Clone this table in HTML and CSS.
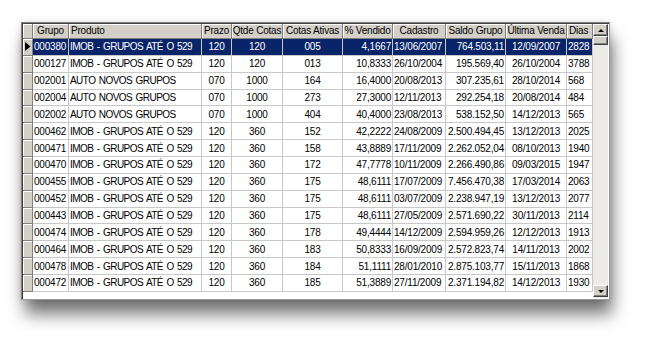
FILE: index.html
```html
<!DOCTYPE html>
<html>
<head>
<meta charset="utf-8">
<link rel="stylesheet" href="styles.css">
</head>
<body>
<div class="frame">
  <div class="grid">
    <table class="tbl">
      <colgroup>
        <col class="c-ind"><col class="c-grupo"><col class="c-prod"><col class="c-prazo"><col class="c-qtde"><col class="c-ativas"><col class="c-vend"><col class="c-cad"><col class="c-saldo"><col class="c-ult"><col class="c-dias">
      </colgroup>
      <thead>
        <tr class="hdr">
          <th class="ind"></th>
          <th>Grupo</th>
          <th class="l">Produto</th>
          <th>Prazo</th>
          <th>Qtde Cotas</th>
          <th>Cotas Ativas</th>
          <th>% Vendido</th>
          <th>Cadastro</th>
          <th>Saldo Grupo</th>
          <th>Última Venda</th>
          <th class="l">Dias</th>
        </tr>
      </thead>
      <tbody>
        <tr class="sel"><td class="ind"><svg class="arrow" width="6" height="9" viewBox="0 0 6 9"><path d="M0 0 L5.5 4.5 L0 9 Z" fill="#000"/></svg></td><td>000380</td><td class="p">IMOB - GRUPOS ATÉ O 529</td><td class="c">120</td><td class="c">120</td><td class="c">005</td><td class="r">4,1667</td><td>13/06/2007</td><td class="r">764.503,11</td><td class="c">12/09/2007</td><td>2828</td></tr>
        <tr><td class="ind"></td><td>000127</td><td class="p">IMOB - GRUPOS ATÉ O 529</td><td class="c">120</td><td class="c">120</td><td class="c">013</td><td class="r">10,8333</td><td>26/10/2004</td><td class="r">195.569,40</td><td class="c">26/10/2004</td><td>3788</td></tr>
        <tr><td class="ind"></td><td>002001</td><td class="p">AUTO NOVOS GRUPOS</td><td class="c">070</td><td class="c">1000</td><td class="c">164</td><td class="r">16,4000</td><td>20/08/2013</td><td class="r">307.235,61</td><td class="c">28/10/2014</td><td>568</td></tr>
        <tr><td class="ind"></td><td>002004</td><td class="p">AUTO NOVOS GRUPOS</td><td class="c">070</td><td class="c">1000</td><td class="c">273</td><td class="r">27,3000</td><td>12/11/2013</td><td class="r">292.254,18</td><td class="c">20/08/2014</td><td>484</td></tr>
        <tr><td class="ind"></td><td>002002</td><td class="p">AUTO NOVOS GRUPOS</td><td class="c">070</td><td class="c">1000</td><td class="c">404</td><td class="r">40,4000</td><td>23/08/2013</td><td class="r">538.152,50</td><td class="c">14/12/2013</td><td>565</td></tr>
        <tr><td class="ind"></td><td>000462</td><td class="p">IMOB - GRUPOS ATÉ O 529</td><td class="c">120</td><td class="c">360</td><td class="c">152</td><td class="r">42,2222</td><td>24/08/2009</td><td class="r">2.500.494,45</td><td class="c">13/12/2013</td><td>2025</td></tr>
        <tr><td class="ind"></td><td>000471</td><td class="p">IMOB - GRUPOS ATÉ O 529</td><td class="c">120</td><td class="c">360</td><td class="c">158</td><td class="r">43,8889</td><td>17/11/2009</td><td class="r">2.262.052,04</td><td class="c">08/10/2013</td><td>1940</td></tr>
        <tr><td class="ind"></td><td>000470</td><td class="p">IMOB - GRUPOS ATÉ O 529</td><td class="c">120</td><td class="c">360</td><td class="c">172</td><td class="r">47,7778</td><td>10/11/2009</td><td class="r">2.266.490,86</td><td class="c">09/03/2015</td><td>1947</td></tr>
        <tr><td class="ind"></td><td>000455</td><td class="p">IMOB - GRUPOS ATÉ O 529</td><td class="c">120</td><td class="c">360</td><td class="c">175</td><td class="r">48,6111</td><td>17/07/2009</td><td class="r">7.456.470,38</td><td class="c">17/03/2014</td><td>2063</td></tr>
        <tr><td class="ind"></td><td>000452</td><td class="p">IMOB - GRUPOS ATÉ O 529</td><td class="c">120</td><td class="c">360</td><td class="c">175</td><td class="r">48,6111</td><td>03/07/2009</td><td class="r">2.238.947,19</td><td class="c">13/12/2013</td><td>2077</td></tr>
        <tr><td class="ind"></td><td>000443</td><td class="p">IMOB - GRUPOS ATÉ O 529</td><td class="c">120</td><td class="c">360</td><td class="c">175</td><td class="r">48,6111</td><td>27/05/2009</td><td class="r">2.571.690,22</td><td class="c">30/11/2013</td><td>2114</td></tr>
        <tr><td class="ind"></td><td>000474</td><td class="p">IMOB - GRUPOS ATÉ O 529</td><td class="c">120</td><td class="c">360</td><td class="c">178</td><td class="r">49,4444</td><td>14/12/2009</td><td class="r">2.594.959,26</td><td class="c">12/12/2013</td><td>1913</td></tr>
        <tr><td class="ind"></td><td>000464</td><td class="p">IMOB - GRUPOS ATÉ O 529</td><td class="c">120</td><td class="c">360</td><td class="c">183</td><td class="r">50,8333</td><td>16/09/2009</td><td class="r">2.572.823,74</td><td class="c">14/11/2013</td><td>2002</td></tr>
        <tr><td class="ind"></td><td>000478</td><td class="p">IMOB - GRUPOS ATÉ O 529</td><td class="c">120</td><td class="c">360</td><td class="c">184</td><td class="r">51,1111</td><td>28/01/2010</td><td class="r">2.875.103,77</td><td class="c">15/11/2013</td><td>1868</td></tr>
        <tr><td class="ind"></td><td>000472</td><td class="p">IMOB - GRUPOS ATÉ O 529</td><td class="c">120</td><td class="c">360</td><td class="c">185</td><td class="r">51,3889</td><td>27/11/2009</td><td class="r">2.371.194,82</td><td class="c">14/12/2013</td><td>1930</td></tr>
      </tbody>
    </table>
  </div>
  <div class="vscroll">
    <div class="sbtn"><span class="tri-up"></span></div>
    <div class="thumb"></div>
    <div class="track"></div>
    <div class="sbtn"><span class="tri-down"></span></div>
  </div>
</div>
</body>
</html>
```

FILE: styles.css
```css
html, body {
  margin: 0;
  padding: 0;
  background: #ffffff;
}
body {
  width: 652px;
  height: 344px;
  overflow: hidden;
  font-family: "Liberation Sans", Arial, sans-serif;
  font-size: 10px;
  letter-spacing: -0.2px;
  color: #000;
}
.frame {
  margin: 22px 0 0 21px;
  width: 589px;
  height: 278px;
  box-sizing: border-box;
  display: flex;
  background: #ffffff;
  border-top: 1px solid #808080;
  border-left: 1px solid #808080;
  border-right: 1px solid #9a9a9a;
  border-bottom: 1px solid #9a9a9a;
  box-shadow: inset 1px 1px 0 #404040, 3px 15px 16px -1px rgba(0,0,0,0.55), 0 0 7px rgba(0,0,0,0.14);
  padding: 1px;
}
.grid {
  width: 570px;
  flex: none;
  overflow: hidden;
}
.tbl {
  table-layout: fixed;
  border-collapse: separate;
  border-spacing: 0;
  width: 570px;
}
.c-ind { width: 10px; }
.c-grupo { width: 36px; }
.c-prod { width: 133px; }
.c-prazo { width: 30px; }
.c-qtde { width: 51px; }
.c-ativas { width: 60px; }
.c-vend { width: 50px; }
.c-cad { width: 53px; }
.c-saldo { width: 60px; }
.c-ult { width: 61px; }
.c-dias { width: 26px; }

.tbl th, .tbl td {
  padding: 0 1px;
  box-sizing: border-box;
  white-space: nowrap;
  overflow: hidden;
  font-weight: normal;
  line-height: 15px;
}
.hdr { height: 15px; }
.hdr th {
  background: #d4d0c8;
  text-align: center;
  border-right: 1px solid #808080;
  border-bottom: 1px solid #808080;
  box-shadow: inset 1px 1px 0 #ffffff;
  line-height: 14px;
  padding: 0;
}
.hdr th.l { text-align: left; padding-left: 2px; }
tbody tr { height: 16.86px; }
tbody td {
  border-right: 1px solid #c8c8c8;
  border-bottom: 1px solid #c8c8c8;
  text-align: left;
}
tbody td.c { text-align: center; }
tbody td.r { text-align: right; }
tbody td.p { letter-spacing: -0.55px; word-spacing: 1.2px; }
.tbl .ind {
  background: #d4d0c8;
  border-right: 1px solid #808080;
  border-bottom: 1px solid #808080;
  box-shadow: inset 1px 1px 0 #ffffff;
  padding: 0;
}
.sel td {
  background: #0a246a;
  color: #ffffff;
}
.sel td.ind { background: #d4d0c8; }
.arrow { display: block; margin: 0 0 0 2px; }

.vscroll {
  width: 15px;
  flex: none;
  display: flex;
  flex-direction: column;
  background: #ecebe7;
  padding-bottom: 1px;
}
.sbtn {
  height: 12px;
  box-sizing: border-box;
  background: #d4d0c8;
  border-top: 1px solid #ffffff;
  border-left: 1px solid #ffffff;
  border-right: 1px solid #404040;
  border-bottom: 1px solid #404040;
  box-shadow: inset -1px -1px 0 #808080;
  display: flex;
  align-items: center;
  justify-content: center;
}
.thumb {
  height: 9px;
  box-sizing: border-box;
  background: #d4d0c8;
  border-top: 1px solid #ffffff;
  border-left: 1px solid #ffffff;
  border-right: 1px solid #404040;
  border-bottom: 1px solid #404040;
  box-shadow: inset -1px -1px 0 #808080;
}
.track { flex: 1; }
.tri-up {
  width: 0; height: 0;
  border-left: 3px solid transparent;
  border-right: 3px solid transparent;
  border-bottom: 3px solid #000;
}
.tri-down {
  width: 0; height: 0;
  border-left: 3px solid transparent;
  border-right: 3px solid transparent;
  border-top: 3px solid #000;
}
```
